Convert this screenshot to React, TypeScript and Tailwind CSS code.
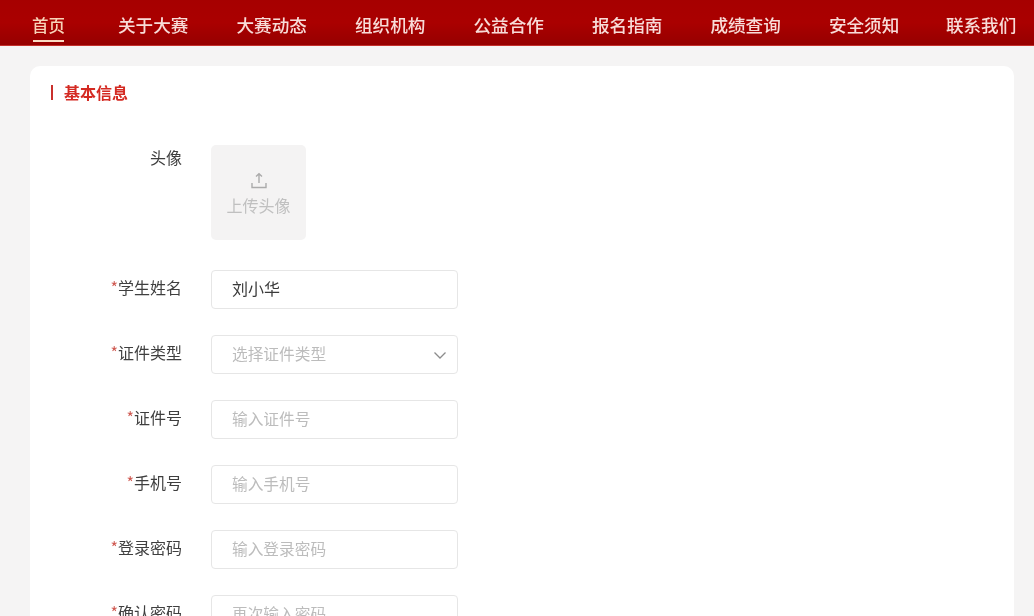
const font = { fontFamily: '"Noto Sans CJK SC", "Liberation Sans", sans-serif' };

const nav = ["关于大赛", "大赛动态", "组织机构", "公益合作", "报名指南", "成绩查询", "安全须知", "联系我们"];

function Label({ text }: { text: string }) {
  return (
    <div className="w-[152px] shrink-0 text-right text-[16px] leading-[35px] whitespace-nowrap text-[#3f3f3f]">
      <span className="text-[#cf5a52]">*</span>
      {text}
    </div>
  );
}

function Field({ text, placeholder = true, select = false }: { text: string; placeholder?: boolean; select?: boolean }) {
  return (
    <div className="ml-[29px] flex h-[39px] w-[247px] items-center justify-between rounded-[4px] border border-[#e6e6e6] pl-[20px] pr-[9px]">
      <span className={placeholder ? "pb-[2px] text-[15.7px] text-[#bcbcbc]" : "pb-[4px] text-[16px] text-[#3a3a3a]"}>{text}</span>
      {select && (
        <svg width="16" height="16" viewBox="0 0 16 16" fill="none" stroke="#8c8c8c" strokeWidth="1.3">
          <path d="M2.5 5.5 8 11l5.5-5.5" />
        </svg>
      )}
    </div>
  );
}

function Row({ label, text, placeholder = true, select = false }: { label: string; text: string; placeholder?: boolean; select?: boolean }) {
  return (
    <div className="flex h-[39px] items-start">
      <Label text={label} />
      <Field text={text} placeholder={placeholder} select={select} />
    </div>
  );
}

export default function App() {
  return (
    <div className="h-[616px] w-[1034px] overflow-hidden bg-[#f5f4f4] blur-[0.4px]" style={font}>
      <header className="flex h-[46px] items-start border-b border-b-[#c4302c] bg-gradient-to-b from-[#a60000] via-[#aa0000] to-[#960000] pl-[32px] pt-[13px]">
        <div className="mr-[53px] flex w-[33px] flex-col">
          <span className="text-[16.5px] leading-[24px] font-medium whitespace-nowrap text-[#f8d3b8]">首页</span>
          <span className="mt-[3px] ml-[1px] h-[2px] w-[31px] bg-[#fbdcc4]" />
        </div>
        <nav className="flex gap-[47.9px]">
          {nav.map((n) => (
            <span key={n} className="w-[70.6px] text-[17.6px] leading-[24px] font-medium whitespace-nowrap text-[#f8dcd8] last:-ml-[1.5px]">
              {n}
            </span>
          ))}
        </nav>
      </header>
      <main className="ml-[30px] mr-[20px] mt-[20px] h-[600px] rounded-t-[10px] bg-white">
        <div className="flex items-center pl-[21px] pt-[16px]">
          <span className="h-[15px] w-[2px] bg-[#c9302c]" />
          <h2 className="ml-[11px] text-[16px] leading-[20px] font-bold text-[#d42a22]">基本信息</h2>
        </div>
        <div className="mt-[43px]">
          <div className="flex items-start">
            <div className="w-[152px] shrink-0 text-right text-[16px] leading-[24px] text-[#3f3f3f]">头像</div>
            <div className="ml-[29px] flex h-[95px] w-[95px] flex-col items-center rounded-[5px] bg-[#f4f3f3] pt-[26px]">
              <svg width="20" height="20" viewBox="0 0 20 20" fill="none" stroke="#ababab" strokeWidth="1.4">
                <path d="M10 3v9M7 5.6 10 2.8l3 2.8M3 12v4.5h14V12" />
              </svg>
              <span className="mt-[3px] whitespace-nowrap text-[16px] leading-[22px] text-[#c0c0c0]">上传头像</span>
            </div>
          </div>
          <div className="mt-[30px] flex flex-col gap-[26px]">
            <Row label="学生姓名" text="刘小华" placeholder={false} />
            <Row label="证件类型" text="选择证件类型" select />
            <Row label="证件号" text="输入证件号" />
            <Row label="手机号" text="输入手机号" />
            <Row label="登录密码" text="输入登录密码" />
            <Row label="确认密码" text="再次输入密码" />
          </div>
        </div>
      </main>
    </div>
  );
}
